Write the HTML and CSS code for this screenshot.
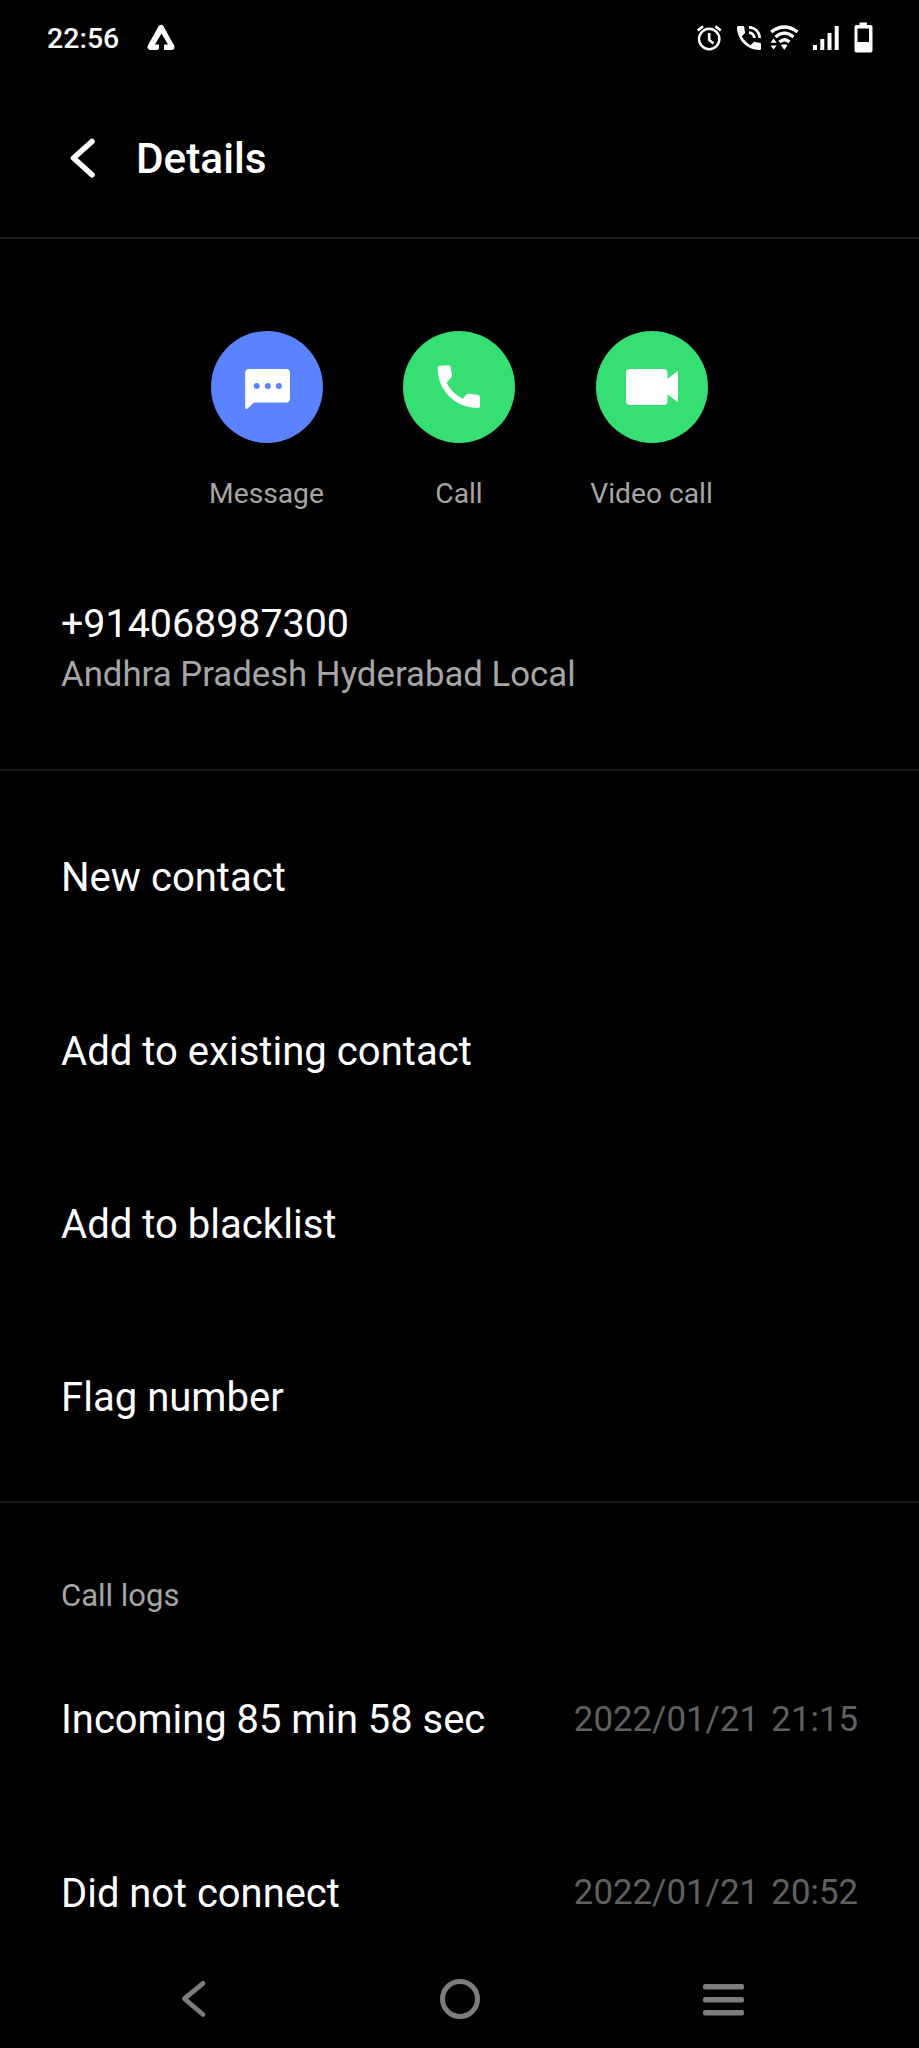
FILE: index.html
```html
<!DOCTYPE html>
<html lang="en">
<head>
<meta charset="utf-8">
<title>Details</title>
<link rel="stylesheet" href="styles.css">
</head>
<body>
<div class="screen">
  <div class="status-bar">
    <span class="clock">22:56</span>
    <svg class="app-mark" width="30" height="28" viewBox="146 24 30 28"><path d="M161 28 L150.5 47 H156.5 V44 H153.5 L161 31 L168.5 44 H165.5 V47 H171.500 Z" fill="#fff" stroke="#fff" stroke-width="6" stroke-linejoin="round"/><path d="M161.500 33.500 L168 44.500 H164 V51 H159 V44.500 H155 Z" fill="#000"/></svg>
    <div class="status-icons">
      <svg width="26" height="30" viewBox="696 22 26 30" fill="none" stroke="#fff"><circle cx="709.200" cy="38" r="10.200" stroke-width="2.400"/><path d="M709.200 32 V39 L713.500 42.500" stroke-width="2.600"/><path d="M697.700 29.500 L703 25.200 M720.700 29.500 L715.400 25.200" stroke-width="2.600"/></svg>
      <svg class="icon-talk" width="24" height="24" viewBox="3 3 18 18" fill="#fff"><path d="M20 15.500c-1.250 0-2.450-.2-3.570-.57-.35-.11-.74-.03-1.020.24l-2.200 2.200c-2.830-1.440-5.150-3.750-6.590-6.590l2.200-2.210c.28-.26.36-.65.25-1C8.700 6.450 8.500 5.250 8.500 4c0-.55-.45-1-1-1H4c-.55 0-1 .45-1 1 0 9.390 7.610 17 17 17 .55 0 1-.45 1-1v-3.500c0-.55-.45-1-1-1zM19 12h2c0-4.970-4.030-9-9-9v2c3.870 0 7 3.130 7 7zm-4 0h2c0-2.760-2.240-5-5-5v2c1.660 0 3 1.340 3 3z"/></svg>
      <svg class="icon-wifi" width="30" height="30" viewBox="769 22 30 30"><g fill="none" stroke="#fff" stroke-width="3.200"><path d="M771.200 31 Q784.500 21 797.500 31"/><path d="M775.500 36 Q784.500 28.300 793.500 36"/><path d="M779.500 41 Q784.500 36.500 789.500 41"/></g><path d="M781 44.500 Q784.300 42 787.500 44.500 L784.300 48.700Z M770.500 41.700 L773.600 37.600 L776.700 41.700Z M770.500 44.500 L773.600 48.600 L776.700 44.500Z" fill="#fff"/></svg>
      <svg class="icon-signal" width="28" height="26" viewBox="812 24 28 26" fill="#fff"><path d="M813 44h4v5h-4z M820.300 38h4v11h-4z M827.500 32h4v17h-4z M834.700 25h4v24h-4z"/></svg>
      <svg class="icon-battery" width="20" height="32" viewBox="853 22 20 32"><path fill="#fff" fill-rule="evenodd" d="M859.500 22.500h7.500v2.500h3.500q2 0 2 2v23.500q0 2-2 2h-14q-2 0-2-2v-23.500q0-2 2-2h3z M857.500 28.500v13.500h11.500v-13.500z"/></svg>
    </div>
  </div>
  <div class="header">
    <svg width="26" height="42" viewBox="69 135 26 42" fill="none" stroke="#fff" stroke-width="5.600" stroke-linecap="round" stroke-linejoin="round"><path d="M92 140.500 L73.500 157 L92 173.800"/></svg>
    <h1 class="title">Details</h1>
  </div>
  <div class="actions">
    <div class="action">
      <div class="disc disc-blue"><svg width="112" height="112" viewBox="211 331 112 112"><path fill="#fff" d="M249.200 369H286q4 0 4 4V398.500q0 4-4 4H254L247.500 408.500Q245.200 410 245.200 407V373q0-4 4-4z"/><g fill="#5b82ff"><circle cx="256.700" cy="386" r="3"/><circle cx="267.800" cy="386" r="3"/><circle cx="278.900" cy="386" r="3"/></g></svg></div>
      <span class="action-label">Message</span>
    </div>
    <div class="action">
      <div class="disc disc-green"><svg width="43.700" height="43.700" viewBox="38 36 131 131" fill="#fff"><path d="M40 43Q40 38 45 38L73 37Q78 37 79 42L83 66Q84 70 80 74L67 89Q83 121 115 137L127 124Q130 121 135 122L162 126Q167 127 167 132L167 159Q167 165 161 165C92 166 38 110 40 43Z"/></svg></div>
      <span class="action-label">Call</span>
    </div>
    <div class="action">
      <div class="disc disc-green"><svg width="112" height="112" viewBox="596 331 112 112" fill="#fff"><rect x="626" y="369" width="41.500" height="36" rx="4"/><path d="M666 380 L677 371.500Q678 371 678 372V401.500Q678 402.500 677 401.800L666 393z"/></svg></div>
      <span class="action-label">Video call</span>
    </div>
  </div>
  <div class="number-block">
    <div class="number">+914068987300</div>
    <div class="place">Andhra Pradesh Hyderabad Local</div>
  </div>
  <ul class="menu">
    <li class="row">New contact</li>
    <li class="row">Add to existing contact</li>
    <li class="row">Add to blacklist</li>
    <li class="row">Flag number</li>
  </ul>
  <div class="logs">
    <h2 class="logs-title">Call logs</h2>
    <div class="row log"><span>Incoming 85 min 58 sec</span><time class="stamp">2022/01/21 21:15</time></div>
    <div class="row log"><span>Did not connect</span><time class="stamp">2022/01/21 20:52</time></div>
  </div>
  <div class="nav">
    <svg width="30" height="48" viewBox="178 1975 30 48" fill="none" stroke="#7d7d7d" stroke-width="4.800" stroke-linecap="round" stroke-linejoin="round"><path d="M203 1983.300 L184.500 1998.700 L203 2014.500"/></svg>
    <svg class="nav-home" width="44" height="44" viewBox="0 0 44 44" fill="none" stroke="#7d7d7d" stroke-width="5"><circle cx="22" cy="22" r="17.500"/></svg>
    <svg width="44" height="36" viewBox="701 1981 44 36" fill="#7d7d7d"><rect x="703" y="1984" width="41" height="5.500" rx="2"/><rect x="703" y="1997" width="41" height="5.500" rx="2"/><rect x="703" y="2010" width="41" height="5.500" rx="2"/></svg>
  </div>
</div>
</body>
</html>
```
FILE: styles.css
```css
* { box-sizing: border-box; margin: 0; padding: 0; }
body { background: #000; color: #fff; font-family: Roboto, "Liberation Sans", sans-serif; }
svg { display: block; flex: none; }
.screen { width: 919px; height: 2048px; display: flex; flex-direction: column; overflow: hidden; }
.status-bar { height: 76px; flex: none; display: flex; align-items: center; padding-left: 47px; padding-right: 46px; }
.clock { font-size: 28.500px; font-weight: 500; width: 99px; line-height: 1; padding-top: 2px; }
.status-icons { margin-left: auto; display: flex; align-items: center; }
.icon-talk { margin-left: 15px; }
.icon-wifi { margin-left: 8px; }
.icon-signal { margin-left: 13px; }
.icon-battery { margin-left: 13px; }
.header { height: 163px; flex: none; display: flex; align-items: center; border-bottom: 2px solid #202020; padding-left: 69px; gap: 41px; }
.title { font-size: 42.300px; font-weight: 500; line-height: 50px; padding-top: 5px; }
.actions { height: 328px; flex: none; display: flex; justify-content: center; padding: 92px 1px 0 0; gap: 12.500px; }
.action { width: 180px; display: flex; flex-direction: column; align-items: center; gap: 34px; }
.disc { width: 112px; height: 112px; border-radius: 50%; display: flex; align-items: center; justify-content: center; }
.disc-blue { background: #5b82ff; }
.disc-green { background: #36df73; }
.action-label { font-size: 28.200px; line-height: 34px; color: #a6a6a6; }
.number-block { height: 204px; flex: none; padding: 32px 61px 0; border-bottom: 2px solid #181818; }
.number { font-size: 39.400px; line-height: 50px; }
.place { font-size: 34.750px; line-height: 50px; color: #a6a6a6; }
.menu { list-style: none; height: 732px; flex: none; padding-top: 20px; border-bottom: 2px solid #181818; }
.row { height: 173.400px; padding: 0 61px; display: flex; align-items: center; font-size: 40.100px; }
.logs { flex: 1; min-height: 0; overflow: hidden; padding-top: 70px; }
.logs-title { font-size: 31px; font-weight: 400; line-height: 46px; height: 60px; padding-left: 61px; color: #a6a6a6; }
.log { justify-content: space-between; font-size: 39.900px; }
.stamp { font-size: 34.800px; color: #606060; word-spacing: 3.700px; padding-bottom: 2px; }
.nav { height: 98px; flex: none; display: flex; align-items: center; justify-content: space-between; padding: 0 174px 0 178px; }
.nav-home { margin-left: 10px; }
```
